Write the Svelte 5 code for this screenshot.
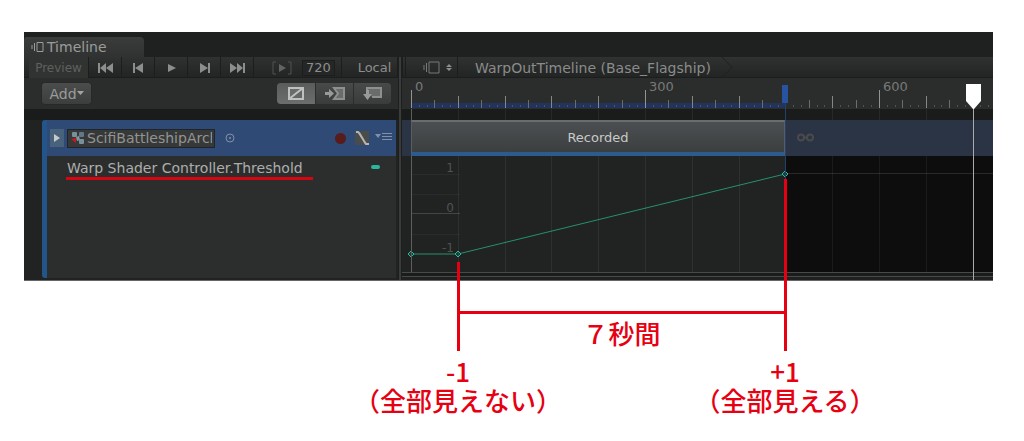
<script>
  const SCALE = 0.78; // pixels per frame
  const ORIGIN = 9;
  const clipEnd = 480;
  const lastFrame = 890;

  let duration = $state('720');
  let binding = $state('ScifiBattleshipArchitect');
  let mode = $state('mix');

  const at = (/** @type {number} */ frame) => Math.round(ORIGIN + frame * SCALE);
  const valueY = (/** @type {number} */ v) => 58 - v * 40;

  const ticks = Array.from({ length: lastFrame / 10 + 1 }, (_, i) => i * 10).map((frame) => ({
    frame,
    kind: frame % 300 === 0 ? 'label' : frame % 60 === 0 ? 'major' : frame % 30 === 0 ? 'mid' : 'minor',
    top: frame % 300 === 0 ? 12 : frame % 60 === 0 ? 18 : frame % 30 === 0 ? 22 : 27,
  }));
  const gridFrames = ticks.filter((t) => t.frame % 60 === 0).map((t) => t.frame);

  const keys = [
    { frame: 0, value: -1 },
    { frame: 60, value: -1 },
    { frame: 480, value: 1 },
  ];
  const curve = keys.map((k) => `${at(k.frame)},${valueY(k.value)}`).join(' ');

  const notes = [
    { frame: 60, rise: 19, value: '-1', text: '（全部見えない）' },
    { frame: 480, rise: 102, value: '+1', text: '（全部見える）' },
  ];

  const transport = [
    { label: 'Go to start', d: 'M1 1h2v10H1zM3 6l6-5v10zM9 6l7-5v10z' },
    { label: 'Previous frame', d: 'M3 1h2v10H3zM5 6l8-5v10z' },
    { label: 'Play', d: 'M5 2l8 4-8 4z' },
    { label: 'Next frame', d: 'M4 1l8 5-8 5zM12 1h2v10h-2z' },
    { label: 'Go to end', d: 'M1 1l7 5-7 5zM8 1l6 5-6 5zM14 1h2v10h-2z' },
  ];
</script>

<main>
  <section class="window">
    <div class="tabs">
      <button class="tab">
        <svg width="13" height="12" viewBox="0 0 13 12">
          <path d="M1 4v4M3.500 2v8M6 1.500h6v9H6z" />
        </svg>
        Timeline
      </button>
    </div>

    <div class="panes">
      <div class="tracks">
        <div class="toolbar">
          <button class="preview">Preview</button>
          {#each transport as item}
            <button class="step" aria-label={item.label}>
              <svg width="17" height="12" viewBox="0 0 17 12"><path d={item.d} /></svg>
            </button>
          {/each}
          <button class="range" aria-label="Play range">
            <svg width="20" height="14" viewBox="0 0 20 14">
              <path class="line" d="M4 1H1v12h3M16 1h3v12h-3" />
              <path d="M7 3l7 4-7 4z" />
            </svg>
          </button>
          <input class="frame" aria-label="Frame" bind:value={duration} />
          <button class="local">Local</button>
        </div>

        <div class="options">
          <button class="add">Add<svg width="7" height="5" viewBox="0 0 7 5"><path d="M0 0h7L3.500 4z" /></svg></button>
          <div class="modes">
            <button class:active={mode === 'mix'} aria-label="Mix mode" onclick={() => (mode = 'mix')}>
              <svg width="16" height="13" viewBox="0 0 16 13">
                <path class="fill" d="M1 12V1h14z" />
                <path class="line" d="M1 1h14v11H1zM1 12L15 1" />
              </svg>
            </button>
            <button class:active={mode === 'ripple'} aria-label="Ripple mode" onclick={() => (mode = 'ripple')}>
              <svg width="20" height="13" viewBox="0 0 20 13">
                <path class="line fill" d="M9 1h10v11H9l4-5.500z" />
                <path class="solid" d="M0 5h4V2l5 4.500L4 11V8H0z" />
              </svg>
            </button>
            <button class:active={mode === 'replace'} aria-label="Replace mode" onclick={() => (mode = 'replace')}>
              <svg width="19" height="13" viewBox="0 0 19 13">
                <path class="line fill" d="M4 4V1h14v9H9" />
                <path class="solid" d="M3 3h3v4h3l-4.500 6L0 7h3z" />
              </svg>
            </button>
          </div>
        </div>

        <div class="track-list">
          <div class="track">
            <div class="track-head">
              <button class="expand" aria-label="Collapse track">
                <svg width="8" height="10" viewBox="0 0 8 10"><path d="M1 1l6 4-6 4z" /></svg>
              </button>
              <label class="binding">
                <svg width="13" height="14" viewBox="0 0 13 14">
                  <rect x="1" y="1" width="5" height="5" rx="1" fill="#78909a" />
                  <rect x="8" y="1" width="5" height="5" rx="1" fill="#607984" />
                  <path d="M5 6l3-1 1 4-3 1z" fill="#8795a0" />
                  <rect x="8" y="8" width="5" height="5" rx="1" fill="#78909a" />
                  <path d="M0 8l5-1v5z" fill="#c01c24" />
                </svg>
                <input aria-label="Track binding" bind:value={binding} />
              </label>
              <button class="plain pick" aria-label="Pick object">
                <svg width="10" height="10" viewBox="0 0 10 10">
                  <circle cx="5" cy="5" r="4" fill="none" stroke="#8290a6" />
                  <circle cx="5" cy="5" r="1" fill="#8290a6" />
                </svg>
              </button>
              <button class="record" aria-label="Record"></button>
              <button class="plain" aria-label="Show curves">
                <svg width="15" height="14" viewBox="0 0 15 14">
                  <rect width="14" height="14" fill="#4a4c4b" />
                  <path d="M1 1h2c2 1 6 10 8 12h3" fill="none" stroke="#b5b6b4" stroke-width="2" />
                </svg>
              </button>
              <button class="plain menu" aria-label="Track menu">
                <svg width="17" height="9" viewBox="0 0 17 9">
                  <path d="M0 2h6L3 6z" fill="#8290a6" />
                  <path d="M7 1.500h10M7 4.500h10M7 7.500h10" stroke="#8290a6" />
                </svg>
              </button>
            </div>
            <div class="property">
              <span class="property-name">Warp Shader Controller.Threshold</span>
              <i class="dot"></i>
            </div>
          </div>
        </div>
      </div>

      <div class="splitter"></div>

      <div class="canvas">
        <div class="toolbar crumbs">
          <button class="asset" aria-label="Select timeline">
            <svg width="30" height="13" viewBox="0 0 30 13">
              <path class="line" d="M1 4v5M3.500 2v9M6 1h10v11H6z" />
              <path d="M23 6l3-3 3 3zM23 7l3 3 3-3z" />
            </svg>
          </button>
          <span class="crumb">WarpOutTimeline (Base_Flagship)</span>
          <svg class="chevron" width="11" height="21" viewBox="0 0 11 21"><path d="M0 0l10 10.500L0 21" /></svg>
        </div>

        <div class="ruler">
          <svg width="100%" height="31">
            <rect x={at(0)} y="25" width={at(clipEnd) - at(0)} height="5" fill="#22345c" />
            {#each ticks as t}
              <rect class={t.kind} x={at(t.frame)} y={t.top} width="1" height={(t.kind === 'minor' ? 29 : 30) - t.top} />
            {/each}
          </svg>
          {#each ticks.filter((t) => t.kind === 'label') as t}
            <span class="ruler-label" style="left: {at(t.frame) + 4}px">{t.frame}</span>
          {/each}
        </div>

        <div class="lanes">
          <div class="lane">
            <button class="clip" style="left: {at(0)}px; width: {at(clipEnd) - at(0)}px">Recorded</button>
            <svg class="loop" style="left: {at(clipEnd) + 12}px" width="17" height="9" viewBox="0 0 17 9">
              <circle cx="4" cy="4.500" r="3" />
              <circle cx="13" cy="4.500" r="3" />
              <path d="M7 4.500h3" />
            </svg>
          </div>
          <div class="curves">
            <svg width="100%" height="116">
              <rect x={at(clipEnd)} y="0" width="100%" height="116" fill="#0d0d0d" />
              <path d="M{at(0)} 18.500h49M{at(0)} 38.500h49M{at(0)} 78.500h49" stroke="#2a2c2b" />
              <path d="M{at(0)} 57.500h49" stroke="#434544" />
              <path d="M{at(clipEnd)} 17.500H2000" stroke="#292929" />
              <polyline points={curve} fill="none" stroke="#259070" />
              {#each keys as k}
                <path class="key" d="M{at(k.frame) - 3} {valueY(k.value)}l3-3 3 3-3 3z" />
              {/each}
            </svg>
            <span class="value one">1</span>
            <span class="value zero">0</span>
            <span class="value minus">-1</span>
          </div>
          <div class="foot"></div>
          <svg class="grid" width="100%" height="100%">
            {#each gridFrames as frame}
              <rect class:start={frame === 0} x={at(frame)} y="0" width="1" height="11" />
              <rect class:start={frame === 0} x={at(frame)} y="47" width="1" height="116" />
            {/each}
          </svg>
        </div>

        <div class="end-marker" style="left: {at(clipEnd)}px"></div>
        <div class="playhead" style="left: {at(720)}px">
          <svg width="15" height="25" viewBox="0 0 15 25"><path d="M0 0h15v17l-7 8h-1l-7-8z" /></svg>
        </div>
      </div>
    </div>
  </section>

  <section class="notes">
    <div class="span" style="left: {at(60)}px; width: {at(clipEnd) - at(60)}px">７秒間</div>
    {#each notes as note}
      <div class="stem" style="left: {at(note.frame)}px; top: {-note.rise}px"></div>
      <p class="note" style="left: {at(note.frame)}px">{note.value}<br />{note.text}</p>
    {/each}
  </section>
</main>

<style>
  :global(body) {
    background: #fff;
  }
  main {
    padding: 32px 31px 0 24px;
    font-family: 'DejaVu Sans', Verdana, sans-serif;
    font-size: 14px;
    color: #9a9c9b;
  }
  button,
  input {
    font: inherit;
    color: inherit;
    background: none;
    border: 0;
    padding: 0;
    margin: 0;
    border-radius: 0;
    min-width: 0;
  }
  svg {
    display: block;
    flex: none;
  }
  .window {
    background: #1f2120;
    border-bottom: 1px solid #666;
  }
  .tabs {
    height: 25px;
    display: flex;
    align-items: flex-end;
  }
  .tab {
    display: flex;
    align-items: center;
    gap: 3px;
    width: 120px;
    height: 20px;
    padding-left: 7px;
    background: linear-gradient(#3a3c3b, #303231);
    border-radius: 3px 4px 0 0;
  }
  .tab path {
    fill: none;
    stroke: #9a9c9b;
  }
  .panes {
    display: grid;
    grid-template-columns: 374px 4px 1fr;
  }
  .splitter {
    background: #3a3c3b;
    border: solid #1d1f1e;
    border-width: 0 1px;
  }
  .toolbar {
    display: flex;
    align-items: center;
    height: 21px;
    background: linear-gradient(#303231, #222423);
    box-shadow: inset 0 -1px #1c1e1d;
  }
  .toolbar button {
    height: 21px;
    display: flex;
    align-items: center;
    justify-content: center;
    border-right: 1px solid #1c1e1d;
  }
  .toolbar path {
    fill: #8c8e8d;
  }
  .toolbar .line {
    fill: none;
    stroke: #777978;
  }
  .toolbar .preview {
    width: 60px;
    margin-left: 5px;
    font-size: 12px;
    color: #5e605f;
    background: #313332;
  }
  .toolbar .step {
    width: 33px;
  }
  .toolbar .range {
    width: 36px;
    margin-left: 10px;
    border-right: 0;
  }
  .toolbar .range path {
    stroke: #505251;
  }
  .toolbar .range path:last-child {
    fill: #626463;
    stroke: none;
  }
  .frame {
    width: 33px;
    height: 16px;
    margin-left: 2px;
    padding-left: 3px;
    box-sizing: border-box;
    background: #252726;
    border: 1px solid #1c1e1d;
    font-size: 13px;
    color: #8c8e8d;
  }
  .toolbar .local {
    flex: 1;
    margin-left: 6px;
    border-left: 1px solid #1c1e1d;
    padding-left: 10px;
    font-size: 13px;
    color: #8c8e8d;
  }
  .options {
    display: flex;
    justify-content: space-between;
    align-items: center;
    height: 31px;
    padding: 0 7px 0 18px;
    box-sizing: border-box;
    background: #2b2d2c;
  }
  .add {
    display: flex;
    align-items: center;
    justify-content: center;
    width: 49px;
    height: 21px;
    border-radius: 3px;
    background: linear-gradient(#4b4d4c, #3c3e3d);
    box-shadow: 0 0 1px #111;
  }
  .add path {
    fill: #a2a4a3;
  }
  .modes {
    display: flex;
    height: 21px;
    border-radius: 4px;
    overflow: hidden;
    background: linear-gradient(#484a49, #3a3c3b);
  }
  .modes button {
    width: 38px;
    display: flex;
    align-items: center;
    justify-content: center;
    border-left: 1px solid #2c2e2d;
  }
  .modes .active {
    background: linear-gradient(#5a5c5b, #6c6e6d);
    border-left: 0;
  }
  .modes .line {
    fill: none;
    stroke: #8e908f;
    stroke-width: 2;
  }
  .modes .fill {
    fill: #6a6c6b;
  }
  .modes .active .line {
    fill: none;
    stroke: #bfc1c0;
  }
  .modes .solid {
    fill: #989a99;
  }
  .track-list {
    background: #212322;
    border-top: 11px solid #1a1c1b;
    padding: 0 2px 2px 18px;
  }
  .track {
    border-left: 5px solid #24558a;
    border-radius: 3px 0 0 3px;
    background: #2c2e2d;
  }
  .track-head {
    display: flex;
    align-items: center;
    height: 36px;
    padding: 0 4px 0 3px;
    background: #2f4a75;
  }
  .expand {
    width: 14px;
    height: 18px;
    display: flex;
    align-items: center;
    justify-content: center;
    background: #48627b;
  }
  .expand path {
    fill: #c6cacb;
  }
  .binding {
    display: flex;
    align-items: center;
    gap: 3px;
    width: 148px;
    height: 19px;
    margin-left: 3px;
    padding: 0 2px 0 3px;
    box-sizing: border-box;
    background: #373938;
    border: 1px solid #20242b;
    color: #929493;
  }
  .binding input {
    flex: 1;
  }
  .plain {
    display: flex;
  }
  .pick {
    margin-left: 10px;
  }
  .record {
    width: 11px;
    height: 11px;
    margin-left: auto;
    margin-right: 9px;
    border-radius: 50%;
    background: #571c1b;
  }
  .menu {
    margin: 0 0 4px 5px;
  }
  .property {
    display: flex;
    justify-content: space-between;
    align-items: flex-start;
    min-height: 122px;
    padding: 3px 16px 0 19px;
    box-sizing: border-box;
    color: #acaead;
  }
  .property-name {
    line-height: 18px;
    padding: 0 10px 0 1px;
    border-bottom: 3px solid #d7050f;
  }
  .dot {
    width: 9px;
    height: 4px;
    margin-top: 6px;
    border-radius: 2px;
    background: #2bb59a;
  }
  .canvas {
    position: relative;
    overflow: hidden;
    min-width: 0;
  }
  .toolbar .asset {
    width: 56px;
    padding-left: 17px;
    border-left: 4px double #1c1e1d;
    box-sizing: border-box;
    justify-content: flex-start;
  }
  .crumb {
    padding: 0 11px 0 17px;
    color: #8a8c8b;
    white-space: nowrap;
  }
  .toolbar .chevron path {
    fill: none;
    stroke: #1f2120;
  }
  .ruler {
    position: relative;
    height: 31px;
    background: #2b2d2c;
  }
  .label {
    fill: #929493;
  }
  .major {
    fill: #858786;
  }
  .mid {
    fill: #6b6d6c;
  }
  .minor {
    fill: #4b5260;
  }
  .ruler-label {
    position: absolute;
    top: 1px;
    font-size: 13px;
    line-height: 16px;
    color: #777978;
  }
  .lanes {
    position: relative;
    padding-top: 11px;
    background: #1a1c1b;
  }
  .lane {
    position: relative;
    height: 36px;
    background: #2b3444;
  }
  .clip {
    position: absolute;
    top: 0;
    height: 36px;
    box-sizing: border-box;
    background: linear-gradient(#4c4f51, #3c3f40);
    border: 1px solid #5b5e60;
    border-top: 2px solid #6a6c6d;
    border-bottom: 4px solid #2b5b8f;
    font-size: 13px;
    color: #c8cac9;
  }
  .loop {
    position: absolute;
    top: 13px;
  }
  .loop circle,
  .loop path {
    fill: none;
    stroke: #4a4a4a;
    stroke-width: 2;
  }
  .curves {
    position: relative;
    background: #212322;
  }
  .key {
    fill: #14423a;
    stroke: #2fb79d;
  }
  .value {
    position: absolute;
    left: 18px;
    width: 34px;
    font-size: 12px;
    line-height: 14px;
    text-align: right;
    color: #505251;
  }
  .one {
    top: 5px;
  }
  .zero {
    top: 45px;
  }
  .minus {
    top: 85px;
  }
  .foot {
    height: 3px;
    border-top: 1px solid #484a49;
    border-bottom: 1px solid #484a49;
    margin-bottom: 3px;
  }
  .grid {
    position: absolute;
    inset: 0;
    pointer-events: none;
  }
  .grid rect {
    fill: rgba(255, 255, 255, 0.06);
  }
  .grid .start {
    fill: #5c5e5d;
  }
  .end-marker {
    position: absolute;
    top: 46px;
    width: 1px;
    height: 76px;
    background: #24406f;
  }
  .end-marker::before {
    content: '';
    position: absolute;
    top: -18px;
    left: -3px;
    width: 6px;
    height: 18px;
    background: #2753a0;
  }
  .playhead {
    position: absolute;
    top: 27px;
    bottom: 0;
    width: 1px;
    background: #aaa;
  }
  .playhead svg {
    margin-left: -7px;
  }
  .playhead path {
    fill: #fff;
  }
  .notes {
    position: relative;
    height: 150px;
    margin-left: 378px;
    font-family: 'Noto Sans CJK JP', sans-serif;
    font-size: 26px;
    font-weight: 500;
    line-height: 29px;
    text-align: center;
    color: #e60012;
  }
  .span {
    position: absolute;
    top: 30px;
    padding-top: 4px;
    border-top: 3px solid #e60012;
  }
  .stem {
    position: absolute;
    bottom: 80px;
    width: 3px;
    margin-left: -1px;
    background: #e60012;
  }
  .note {
    position: absolute;
    top: 75px;
    margin: 0;
    transform: translateX(-50%);
    white-space: nowrap;
  }
</style>
